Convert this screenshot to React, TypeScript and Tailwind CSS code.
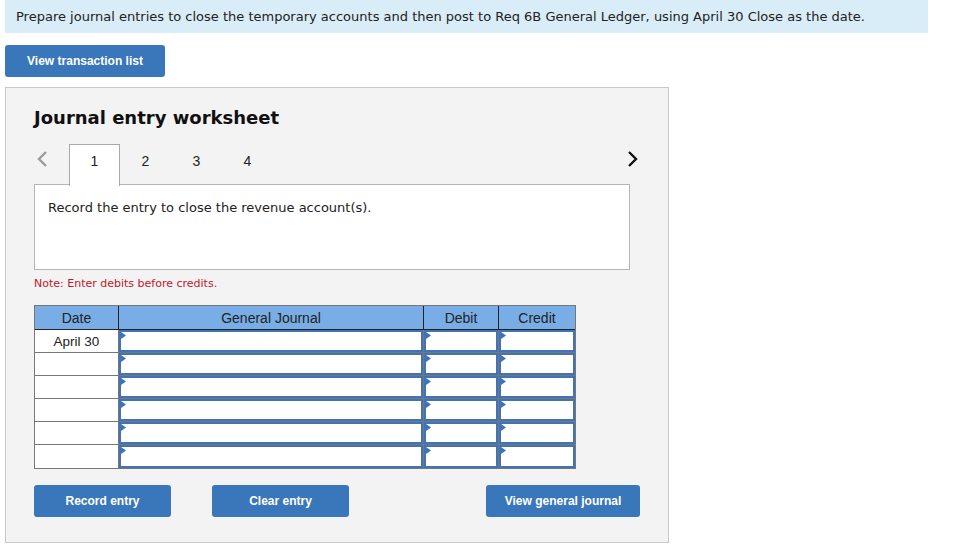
import React from "react";

const verdana = { fontFamily: '"DejaVu Sans", Verdana, sans-serif' };

function Tri() {
  return (
    <svg className="absolute left-0 top-0" width="6" height="8" viewBox="0 0 6 8">
      <path d="M0 0 L5 3.5 L0 7 Z" fill="#3a73c2" />
    </svg>
  );
}

function InputCell({ w }: { w: string }) {
  return (
    <div className={`${w} h-full border-r border-[#777] last:border-r-0`}>
      <div className="relative h-full border-2 border-[#4174b7] bg-white">
        <Tri />
      </div>
    </div>
  );
}

export default function App() {
  const rows = ["April 30", "", "", "", "", ""];
  return (
    <div className="w-[954px] h-[556px] bg-white text-[#222] overflow-hidden" style={verdana}>
      <div className="ml-[5px] w-[923px] h-[33px] bg-[#d9edf8] px-[11px] flex items-center text-[13px] text-[#222]">
        Prepare journal entries to close the temporary accounts and then post to Req 6B General Ledger, using April 30 Close as the date.
      </div>
      <button
        className="mt-[12px] ml-[5px] w-[160px] h-[32px] rounded-[3px] bg-[#3a76ba] text-white text-[12px] font-bold flex items-center justify-center"
        style={{ fontFamily: '"Liberation Sans", Arial, sans-serif' }}
      >
        View transaction list
      </button>
      <div className="mt-[10px] ml-[5px] w-[664px] h-[456px] border border-[#c9c9c9] bg-[#f3f3f3] px-[28px] pt-[18px]">
        <div className="text-[18px] font-bold leading-[24px] text-[#111]">Journal entry worksheet</div>
        <div className="mt-[14px] w-[604px] h-[41px] flex items-start">
          <div className="w-[35px] h-full flex items-start pt-[6px]">
            <svg width="14" height="18" viewBox="0 0 14 18" className="ml-[2px]">
              <path d="M10 2 L3 9 L10 16" fill="none" stroke="#9a9a9a" strokeWidth="2.4" />
            </svg>
          </div>
          <div className="flex h-full text-[14px]" style={{ fontFamily: '"Liberation Sans", Arial, sans-serif' }}>
            <div className="relative z-10 w-[51px] h-[42px] bg-white border border-b-0 border-[#a9a9a9] flex justify-center pt-[6px]">1</div>
            <div className="w-[51px] h-full flex justify-center pt-[7px]">2</div>
            <div className="w-[51px] h-full flex justify-center pt-[7px]">3</div>
            <div className="w-[51px] h-full flex justify-center pt-[7px]">4</div>
          </div>
          <svg width="12" height="18" viewBox="0 0 12 18" className="ml-auto mt-[6px]">
            <path d="M3 2 L10 9 L3 16" fill="none" stroke="#111" strokeWidth="2.4" />
          </svg>
        </div>
        <div className="w-[596px] h-[86px] -mt-px border border-[#b5b5b5] bg-white px-[13px] pt-[14px] text-[13px] leading-[18px]">
          Record the entry to close the revenue account(s).
        </div>
        <div className="mt-[7px] text-[11px] leading-[14px] text-[#c0182e]">Note: Enter debits before credits.</div>
        <div
          className="mt-[14px] w-[542px] border border-[#777] text-[13px]"
          style={{ fontFamily: '"Liberation Sans", Arial, sans-serif' }}
        >
          <div className="flex h-[24px] bg-[#79ade6] border-b border-[#222] text-[#222] text-[14px]">
            <div className="w-[84px] border-r border-[#222] flex items-center justify-center pt-[2px]">Date</div>
            <div className="w-[305px] border-r border-[#222] flex items-center justify-center pt-[2px]">General Journal</div>
            <div className="w-[75px] border-r border-[#222] flex items-center justify-center pt-[2px]">Debit</div>
            <div className="w-[76px] flex items-center justify-center pt-[2px]">Credit</div>
          </div>
          {rows.map((d, i) => (
            <div key={i} className={`flex h-[23px] bg-white ${i < rows.length - 1 ? "border-b border-[#777]" : ""}`}>
              <div className="w-[84px] border-r border-[#777] flex items-center justify-center text-[#222] text-[13.5px] pt-[2px]">{d}</div>
              <InputCell w="w-[305px]" />
              <InputCell w="w-[75px]" />
              <InputCell w="w-[76px]" />
            </div>
          ))}
        </div>
        <div
          className="mt-[16px] w-[606px] flex text-white text-[12px] font-bold"
          style={{ fontFamily: '"Liberation Sans", Arial, sans-serif' }}
        >
          <button className="w-[137px] h-[32px] rounded-[3px] bg-[#3a76ba] flex items-center justify-center">Record entry</button>
          <button className="ml-[41px] w-[137px] h-[32px] rounded-[3px] bg-[#3a76ba] flex items-center justify-center">Clear entry</button>
          <button className="ml-auto w-[154px] h-[32px] rounded-[3px] bg-[#3a76ba] flex items-center justify-center">View general journal</button>
        </div>
      </div>
    </div>
  );
}
